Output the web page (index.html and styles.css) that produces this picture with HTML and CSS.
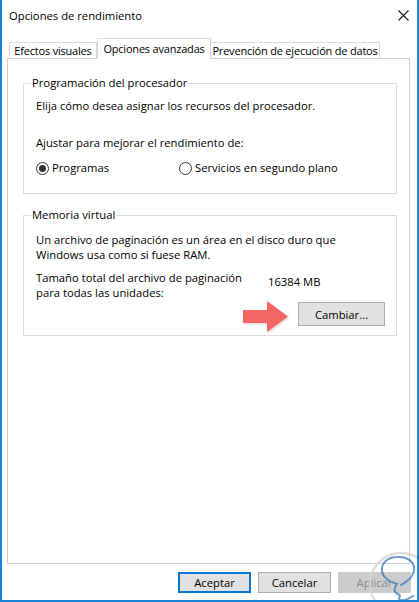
FILE: index.html
```html
<!DOCTYPE html>
<html lang="es">
<head>
<meta charset="utf-8">
<title>Opciones de rendimiento</title>
<link rel="stylesheet" href="styles.css">
</head>
<body>
<div class="window">
  <div class="titlebar">
    <span class="title">Opciones de rendimiento</span>
    <svg class="close" width="11" height="11" viewBox="0 0 11 11"><path d="M0.5 0.5L10.5 10.5M10.5 0.5L0.5 10.5" stroke="#1a1a1a" stroke-width="1.1" fill="none"/></svg>
  </div>
  <div class="tabs">
    <div class="tab tab-1">Efectos visuales</div>
    <div class="tab tab-2 active">Opciones avanzadas</div>
    <div class="tab tab-3">Prevención de ejecución de datos</div>
  </div>
  <div class="pane">
    <fieldset class="group g1">
      <legend>Programación del procesador</legend>
      <p class="line first">Elija cómo desea asignar los recursos del procesador.</p>
      <p class="line adjust">Ajustar para mejorar el rendimiento de:</p>
      <div class="radios">
        <label class="radio r1"><span class="dot checked"></span>Programas</label>
        <label class="radio r2"><span class="dot"></span>Servicios en segundo plano</label>
      </div>
    </fieldset>
    <fieldset class="group g2">
      <legend>Memoria virtual</legend>
      <p class="line first">Un archivo de paginación es un área en el disco duro que<br>Windows usa como si fuese RAM.</p>
      <div class="sizerow">
        <p class="line sizelabel">Tamaño total del archivo de paginación<br>para todas las unidades:</p>
        <span class="sizevalue">16384 MB</span>
      </div>
      <div class="changerow">
        <svg class="arrow" width="48" height="34" viewBox="0 0 48 34"><path d="M1 10H25V1L46 16.5L25 32V23H1Z" fill="#f76666"/></svg>
        <button class="btn change">Cambiar...</button>
      </div>
    </fieldset>
  </div>
  <div class="buttons">
    <button class="btn default">Aceptar</button>
    <button class="btn">Cancelar</button>
    <button class="btn disabled">Aplicar</button>
  </div>
  <svg class="watermark" width="52" height="54" viewBox="367 548 52 54">
    <circle cx="401" cy="584" r="31" fill="none" stroke="#d4d4d4" stroke-width="2.5" opacity="0.8"/>
    <path d="M397 557C388 557 381 563 382 571C383 578 390 582 397 584C394 588 393 592 398 594C403 596 396 599 401 600C405 601 410 598 413 596M397 557C407 556 415 562 414 570C413 578 406 582 401 585" fill="none" stroke="#3c78b8" stroke-width="2" stroke-linecap="round" opacity="0.75"/>
  </svg>
</div>
</body>
</html>
```

FILE: styles.css
```css
* { box-sizing: border-box; }
html, body { margin: 0; padding: 0; background: #ffffff; }
body {
  font-family: "Open Sans", "Noto Sans", sans-serif;
  font-size: 11.25px;
  color: #000;
}
.window {
  position: relative;
  width: 419px;
  height: 602px;
  background: #fff;
  border-left: 2px solid #1883d7;
  border-right: 2px solid #1883d7;
  border-bottom: 2px solid #1883d7;
  overflow: hidden;
  display: flex;
  flex-direction: column;
}
.titlebar {
  height: 30px;
  display: flex;
  align-items: center;
  justify-content: space-between;
  padding: 2px 8px 0 7px;
}
.title { font-size: 11.25px; line-height: 16px; }
.close { display: block; margin-top: -1px; }
.tabs {
  display: flex;
  align-items: flex-end;
  height: 20px;
  margin: 8px 0 0 7px;
}
.tab {
  height: 16px;
  border: 1px solid #d9d9d9;
  border-bottom: none;
  background: #fff;
  display: flex;
  align-items: center;
  justify-content: center;
  font-size: 11px;
  line-height: 14px;
  white-space: nowrap;
  letter-spacing: -0.2px;
}
.tab-1 { width: 88px; }
.tab-2 { width: 114px; }
.tab-3 { width: 170px; margin-left: -1px; }
.tab.active {
  height: 21px;
  margin-bottom: -1px;
  position: relative;
  z-index: 1;
  border-color: #d9d9d9;
}
.pane {
  height: 506px;
  margin: 0 7px 0 5px;
  border: 1px solid #d0d0d0;
  padding: 16px 12px 0 15px;
}
.group {
  margin: 0;
  padding: 0 11px 0 12px;
  border: 1px solid #dcdcdc;
  min-width: 0;
}
.group legend {
  padding: 0 1px;
  margin-left: -5px;
  line-height: 16px;
}
.line { margin: 0; line-height: 15px; white-space: nowrap; }
.g1 .first { margin-top: 7px; }
.g1 .adjust { margin-top: 22px; }
.radios { display: flex; margin-top: 10px; padding-bottom: 17px; }
.radio { display: flex; align-items: center; line-height: 16px; height: 16px; }
.r1 { width: 143px; }
.dot {
  width: 13px;
  height: 13px;
  border: 1px solid #333;
  border-radius: 50%;
  margin-right: 3px;
  display: flex;
  align-items: center;
  justify-content: center;
}
.dot.checked::after {
  content: "";
  width: 7px;
  height: 7px;
  border-radius: 50%;
  background: #333;
}
.g2 { margin-top: 13px; }
.g2 .first { margin-top: 9px; }
.sizerow { display: flex; margin-top: 8px; }
.sizelabel { width: 232px; }
.sizevalue { padding-top: 4px; line-height: 15px; }
.changerow {
  position: relative;
  display: flex;
  justify-content: flex-end;
  margin-top: 2px;
  padding-bottom: 9px;
}
.arrow {
  position: absolute;
  left: 206px;
  top: -2px;
  filter: drop-shadow(1px 1px 1px rgba(120, 60, 60, 0.25));
}
.btn {
  font-family: inherit;
  font-size: 11.25px;
  color: #000;
  background: #e1e1e1;
  border: 1px solid #adadad;
  padding: 0;
  margin: 0;
  line-height: 15px;
}
.change { width: 87px; height: 24px; }
.buttons {
  display: flex;
  justify-content: flex-end;
  gap: 7px;
  margin: 8px 6px 0 0;
}
.buttons .btn { width: 73px; height: 21px; }
.btn.default { border: 2px solid #0078d7; }
.btn.disabled { background: #cccccc; border-color: #cccccc; color: #8a8a8a; }
.watermark { position: absolute; left: 365px; top: 548px; }
```
